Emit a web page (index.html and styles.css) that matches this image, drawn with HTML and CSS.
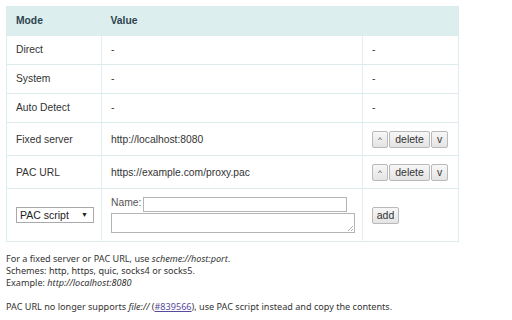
FILE: index.html
```html
<!DOCTYPE html>
<html>
<head>
<meta charset="utf-8">
<link rel="stylesheet" href="styles.css">
</head>
<body>
<table class="proxies">
  <colgroup><col class="c-mode"><col class="c-value"><col class="c-act"></colgroup>
  <thead>
    <tr><th>Mode</th><th>Value</th><th></th></tr>
  </thead>
  <tbody>
    <tr><td>Direct</td><td class="dash">-</td><td class="dash">-</td></tr>
    <tr><td>System</td><td class="dash">-</td><td class="dash">-</td></tr>
    <tr><td>Auto Detect</td><td class="dash">-</td><td class="dash">-</td></tr>
    <tr class="btnrow"><td>Fixed server</td><td>http://localhost:8080</td>
      <td><div class="group"><button class="btn">^</button><button class="btn">delete</button><button class="btn">v</button></div></td></tr>
    <tr class="btnrow"><td>PAC URL</td><td>https://example.com/proxy.pac</td>
      <td><div class="group"><button class="btn">^</button><button class="btn">delete</button><button class="btn">v</button></div></td></tr>
    <tr class="addrow">
      <td><div class="select"><span>PAC script</span><span class="arrow">▼</span></div></td>
      <td>
        <div class="namefield"><span class="lbl">Name:</span><div class="input"></div></div>
        <div class="textarea"><svg class="grip" width="6" height="6" viewBox="0 0 6 6"><path d="M6 1 L1 6 M6 4 L4 6" stroke="#999" stroke-width="0.8" fill="none"/></svg></div>
      </td>
      <td><button class="btn solo">add</button></td>
    </tr>
  </tbody>
</table>
<div class="notes">
  <p>For a fixed server or PAC URL, use <i>scheme://host:port</i>.<br>Schemes: http, https, quic, socks4 or socks5.<br>Example: <i>http://localhost:8080</i></p>
  <p>PAC URL no longer supports <i>file://</i> (<a href="#">#839566</a>), use PAC script instead and copy the contents.</p>
</div>
</body>
</html>
```
FILE: styles.css
```css
html, body { margin: 0; padding: 0; background: #fff; }
body { padding: 6px 0 0 6px; }

.proxies {
  border-collapse: collapse;
  width: 452px;
  table-layout: fixed;
  font-family: "Liberation Sans", Arial, sans-serif;
  font-size: 10.3px;
  color: #333;
  border: 1px solid #dcecec;
}
.c-mode { width: 95px; }
.c-value { width: 261px; }
.c-act { width: 96px; }

.proxies th, .proxies td {
  padding: 8px 9px;
  line-height: 12px;
  text-align: left;
  vertical-align: middle;
  border-top: 1px solid #dcecec;
}
.proxies td { border-left: 1px solid #e2f0f0; }
.proxies td:first-child { border-left: none; }
.proxies th {
  background: #ddeeee;
  color: #2d4450;
  font-weight: bold;
  height: 12px;
}
.btnrow td { padding-top: 8px; padding-bottom: 7px; }
.addrow td { padding-top: 8px; padding-bottom: 8px; }

.group { display: flex; }
.btn {
  font-family: "Liberation Sans", Arial, sans-serif;
  font-size: 10.5px;
  color: #333;
  height: 17px;
  padding: 0 5px;
  margin: 0;
  border: 1px solid #b9b9b9;
  border-radius: 2px;
  background: linear-gradient(#f7f7f7, #e4e4e4);
  line-height: 15px;
}
.group .btn { margin-right: 1px; }
.group .btn:first-child { width: 16px; padding: 0; font-size: 8px; }
.group .btn:nth-child(2) { width: 43px; padding: 0; }
.group .btn:last-child { width: 17px; padding: 0; }
.solo { width: 27px; padding: 0; }

.select {
  display: flex;
  align-items: center;
  justify-content: space-between;
  width: 78px;
  height: 16px;
  box-sizing: border-box;
  border: 1px solid #a9a9a9;
  padding: 0 5px 0 3px;
  font-size: 10.5px;
  background: #fff;
  color: #222;
}
.arrow { font-size: 7px; color: #222; }

.namefield { display: flex; align-items: flex-start; }
.lbl { color: #555; margin-right: 2px; line-height: 12px; }
.input {
  width: 204px;
  height: 15px;
  box-sizing: border-box;
  border: 1px solid #b4b4b4;
  background: #fff;
}
.textarea {
  position: relative;
  width: 244px;
  height: 20px;
  box-sizing: border-box;
  border: 1px solid #b4b4b4;
  margin-top: 1px;
  background: #fff;
}
.grip { position: absolute; right: 1px; bottom: 1px; }

.notes {
  font-family: "Noto Sans", "Open Sans", sans-serif;
  font-size: 9.1px;
  line-height: 12px;
  color: #333;
  margin-top: 11px;
}
.notes p { margin: 0 0 12px 0; }
.notes a { color: #5a4a9a; text-decoration: underline; }
```
